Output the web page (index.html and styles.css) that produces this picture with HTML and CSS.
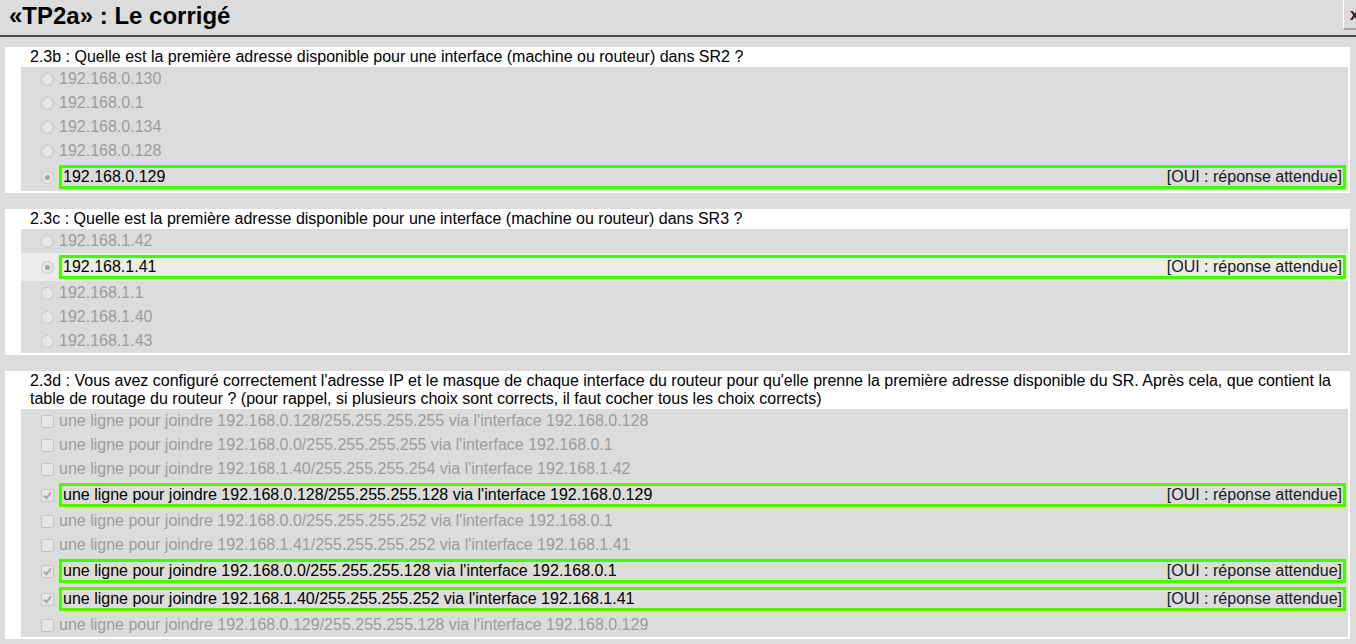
FILE: index.html
```html
<!DOCTYPE html>
<html lang="fr">
<head>
<meta charset="utf-8">
<title>«TP2a» : Le corrigé</title>
<link rel="stylesheet" href="styles.css">
</head>
<body>
<header class="topbar">
  <h1 class="title">«TP2a» : Le corrigé</h1>
  <span class="close">x</span>
</header>
<main class="content">
  <section class="question">
    <div class="qtext">2.3b : Quelle est la première adresse disponible pour une interface (machine ou routeur) dans SR2 ?</div>
    <div class="options">
      <div class="row"><span class="radio"></span><span class="label">192.168.0.130</span></div>
      <div class="row"><span class="radio"></span><span class="label">192.168.0.1</span></div>
      <div class="row"><span class="radio"></span><span class="label">192.168.0.134</span></div>
      <div class="row"><span class="radio"></span><span class="label">192.168.0.128</span></div>
      <div class="row good"><span class="radio on"></span><span class="label"><span>192.168.0.129</span><span class="verdict">[OUI : réponse attendue]</span></span></div>
    </div>
  </section>
  <section class="question">
    <div class="qtext">2.3c : Quelle est la première adresse disponible pour une interface (machine ou routeur) dans SR3 ?</div>
    <div class="options">
      <div class="row"><span class="radio"></span><span class="label">192.168.1.42</span></div>
      <div class="row good hover"><span class="radio on"></span><span class="label"><span>192.168.1.41</span><span class="verdict">[OUI : réponse attendue]</span></span></div>
      <div class="row"><span class="radio"></span><span class="label">192.168.1.1</span></div>
      <div class="row"><span class="radio"></span><span class="label">192.168.1.40</span></div>
      <div class="row"><span class="radio"></span><span class="label">192.168.1.43</span></div>
    </div>
  </section>
  <section class="question">
    <div class="qtext">2.3d : Vous avez configuré correctement l'adresse IP et le masque de chaque interface du routeur pour qu'elle prenne la première adresse disponible du SR. Après cela, que contient la table de routage du routeur ? (pour rappel, si plusieurs choix sont corrects, il faut cocher tous les choix corrects)</div>
    <div class="options">
      <div class="row"><span class="check"></span><span class="label">une ligne pour joindre 192.168.0.128/255.255.255.255 via l'interface 192.168.0.128</span></div>
      <div class="row"><span class="check"></span><span class="label">une ligne pour joindre 192.168.0.0/255.255.255.255 via l'interface 192.168.0.1</span></div>
      <div class="row"><span class="check"></span><span class="label">une ligne pour joindre 192.168.1.40/255.255.255.254 via l'interface 192.168.1.42</span></div>
      <div class="row good"><span class="check on"><svg viewBox="0 0 13 13" width="13" height="13"><path d="M3 6.8 L5.4 9.2 L10 3.6" fill="none" stroke="#a8a8a8" stroke-width="2"/></svg></span><span class="label"><span>une ligne pour joindre 192.168.0.128/255.255.255.128 via l'interface 192.168.0.129</span><span class="verdict">[OUI : réponse attendue]</span></span></div>
      <div class="row"><span class="check"></span><span class="label">une ligne pour joindre 192.168.0.0/255.255.255.252 via l'interface 192.168.0.1</span></div>
      <div class="row"><span class="check"></span><span class="label">une ligne pour joindre 192.168.1.41/255.255.255.252 via l'interface 192.168.1.41</span></div>
      <div class="row good"><span class="check on"><svg viewBox="0 0 13 13" width="13" height="13"><path d="M3 6.8 L5.4 9.2 L10 3.6" fill="none" stroke="#a8a8a8" stroke-width="2"/></svg></span><span class="label"><span>une ligne pour joindre 192.168.0.0/255.255.255.128 via l'interface 192.168.0.1</span><span class="verdict">[OUI : réponse attendue]</span></span></div>
      <div class="row good"><span class="check on"><svg viewBox="0 0 13 13" width="13" height="13"><path d="M3 6.8 L5.4 9.2 L10 3.6" fill="none" stroke="#a8a8a8" stroke-width="2"/></svg></span><span class="label"><span>une ligne pour joindre 192.168.1.40/255.255.255.252 via l'interface 192.168.1.41</span><span class="verdict">[OUI : réponse attendue]</span></span></div>
      <div class="row"><span class="check"></span><span class="label">une ligne pour joindre 192.168.0.129/255.255.255.128 via l'interface 192.168.0.129</span></div>
    </div>
  </section>
</main>
</body>
</html>
```
FILE: styles.css
```css
html, body {
  margin: 0;
  padding: 0;
  overflow: hidden;
}
body {
  background: #dcdcdc;
  font-family: "Liberation Sans", Arial, sans-serif;
  font-size: 16px;
  color: #000;
}
.topbar {
  position: relative;
  height: 35px;
  border-bottom: 2px solid #4a4a4a;
  box-sizing: border-box;
  height: 37px;
}
.title {
  margin: 0;
  padding: 0 0 0 9px;
  font-size: 24px;
  font-weight: bold;
  line-height: 31px;
  color: #000;
}
.close {
  position: absolute;
  top: 0;
  left: 1343px;
  width: 30px;
  height: 30px;
  box-sizing: border-box;
  border-left: 1px solid #ffffff;
  border-bottom: 2px solid #a8a8a8;
  padding: 0 0 0 6px;
  line-height: 30px;
  font-weight: bold;
  font-size: 16px;
  color: #1a1a2a;
}
.content {
  padding: 10px 0 0 5px;
}
.question {
  width: 1345px;
  box-sizing: border-box;
  background: #ffffff;
  padding: 0 2px 2px 16px;
  margin-bottom: 16px;
}
.qtext {
  padding: 1px 0 1px 9px;
  line-height: 18px;
}
.options {
  background: #dcdcdc;
}
.row {
  display: flex;
  align-items: center;
  height: 24px;
  padding-left: 20px;
  color: #9c9c9c;
}
.row.good {
  height: 28px;
  color: #000;
}
.row.hover {
  background: #ececec;
}
.radio {
  width: 13px;
  height: 13px;
  box-sizing: border-box;
  border: 1px solid #c6c6c6;
  border-radius: 50%;
  background: #e6e6e6;
  margin-right: 5px;
  flex: none;
  display: flex;
  align-items: center;
  justify-content: center;
}
.radio.on::after {
  content: "";
  width: 5px;
  height: 5px;
  border-radius: 50%;
  background: #a6a6a6;
}
.check {
  width: 13px;
  height: 13px;
  box-sizing: border-box;
  border: 1px solid #c4c4c4;
  border-radius: 2px;
  background: #e6e6e6;
  margin-right: 5px;
  flex: none;
  position: relative;
}
.check svg {
  position: absolute;
  left: -1px;
  top: -1px;
}
.label {
  line-height: 24px;
  white-space: nowrap;
}
.row.good .label {
  flex: 1;
  display: flex;
  justify-content: space-between;
  border: 3px solid #4cf700;
  margin: 2px 2px 2px 0;
  padding: 0 1px;
  line-height: 18px;
}
.verdict {
  color: #16162a;
}
```
